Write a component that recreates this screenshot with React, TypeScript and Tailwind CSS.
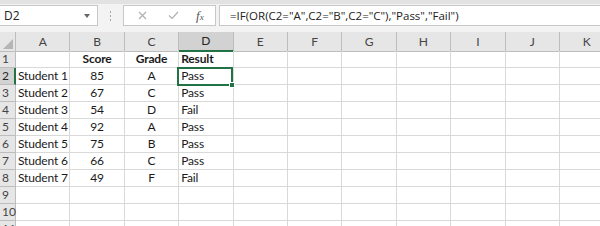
import { Fragment } from "react";

const cols = ["A", "B", "C", "D", "E", "F", "G", "H", "I", "J", "K"];

const rows: (string | null)[][] = [
  [null, "Score", "Grade", "Result"],
  ["Student 1", "85", "A", "Pass"],
  ["Student 2", "67", "C", "Pass"],
  ["Student 3", "54", "D", "Fail"],
  ["Student 4", "92", "A", "Pass"],
  ["Student 5", "75", "B", "Pass"],
  ["Student 6", "66", "C", "Pass"],
  ["Student 7", "49", "F", "Fail"],
  [],
  [],
  [],
];

const cellFont =
  "whitespace-nowrap font-['Lato','Liberation_Sans',sans-serif] text-[12px] tracking-[-0.15px] text-[#1a1a1a]";
const headFont = "font-['Lato','Liberation_Sans',sans-serif] text-[12px]";

function Toolbar() {
  return (
    <div className="h-[32px] border-t-[4px] border-[#e2e2e2] bg-[#f3f3f3] pt-[1px]">
      <div className="flex h-[21px] items-stretch">
        <div className="flex w-[98px] items-center justify-between border border-l-0 border-[#c8c8c8] bg-white pl-[4px] pr-[7px]">
          <span className="font-['Open_Sans','Liberation_Sans',sans-serif] text-[12px] text-[#222]">D2</span>
          <span className="h-0 w-0 border-x-[3.5px] border-t-[4px] border-x-transparent border-t-[#666]" />
        </div>
        <div className="flex w-[25px] flex-col items-center justify-center gap-[2px]">
          <span className="h-[2px] w-[1px] bg-[#a8a8a8]" />
          <span className="h-[2px] w-[1px] bg-[#a8a8a8]" />
          <span className="h-[2px] w-[1px] bg-[#a8a8a8]" />
        </div>
        <div className="flex w-[93px] items-center border border-[#c8c8c8] bg-white pl-[14px]">
          <svg width="9" height="9" viewBox="0 0 9 9" className="shrink-0">
            <path d="M1 1L8 8M8 1L1 8" stroke="#b0b0b0" strokeWidth="1.2" fill="none" />
          </svg>
          <svg width="11" height="9" viewBox="0 0 11 9" className="ml-[21px] shrink-0">
            <path d="M1 4.5L4 7.5L10 1" stroke="#b0b0b0" strokeWidth="1.2" fill="none" />
          </svg>
          <span className="ml-[17px] font-['Liberation_Serif',serif] text-[13px] italic text-[#555]">
            f<span className="text-[9px]">x</span>
          </span>
        </div>
        <div className="ml-[3px] flex flex-1 items-center border border-r-0 border-[#c8c8c8] bg-white pl-[10px]">
          <span className="whitespace-nowrap font-['Open_Sans','Liberation_Sans',sans-serif] text-[11.5px] text-[#222]">
            =IF(OR(C2="A",C2="B",C2="C"),"Pass","Fail")
          </span>
        </div>
      </div>
    </div>
  );
}

function Sheet() {
  return (
    <div className="relative">
      {/* column headers */}
      <div className="grid h-[19px] grid-cols-[16px_repeat(11,54.4px)]">
        <div className="relative border-b border-r border-[#bdbdbd] bg-[#e6e6e6]">
          <span className="absolute bottom-[2px] right-[2px] h-0 w-0 border-b-[10px] border-l-[10px] border-b-[#b5b5b5] border-l-transparent" />
        </div>
        {cols.map((c) => (
          <div
            key={c}
            className={
              c === "D"
                ? `flex items-center justify-center border-b-2 border-r border-b-[#217346] border-r-[#bdbdbd] bg-[#d2d2d2] text-[#262626] ${headFont}`
                : `flex items-center justify-center border-b border-r border-[#bdbdbd] bg-[#e6e6e6] text-[#444] ${headFont}`
            }
          >
            {c}
          </div>
        ))}
      </div>
      {/* cells */}
      <div className="grid grid-cols-[16px_repeat(11,54.4px)] auto-rows-[17px]">
        {rows.map((r, i) => (
          <Fragment key={i}>
            <div
              className={
                i === 1
                  ? `flex items-center border-b border-r-2 border-b-[#bdbdbd] border-r-[#217346] bg-[#d2d2d2] pl-[2px] text-[#262626] ${headFont}`
                  : `flex items-center border-b border-r border-[#bdbdbd] bg-[#e6e6e6] pl-[2px] text-[#444] ${headFont}`
              }
            >
              {i + 1}
            </div>
            {cols.map((c, j) => {
              const v = r[j] ?? "";
              const bold = i === 0;
              const align =
                j === 1 || j === 2 ? "justify-center" : "justify-start pl-[2px]";
              return (
                <div
                  key={c}
                  className={`flex items-center overflow-hidden border-b border-r border-[#d9d9d9] ${align} ${cellFont} ${bold ? "font-bold" : ""}`}
                >
                  {v}
                </div>
              );
            })}
          </Fragment>
        ))}
      </div>
      {/* active cell D2 */}
      <div className="pointer-events-none absolute left-[177px] top-[35px] h-[19px] w-[56px] border-2 border-[#217346]">
        <span className="absolute -bottom-[4px] -right-[4px] h-[6px] w-[6px] border border-white bg-[#217346]" />
      </div>
    </div>
  );
}

export default function App() {
  return (
    <div className="h-[226px] w-[600px] overflow-hidden bg-white">
      <Toolbar />
      <Sheet />
    </div>
  );
}
